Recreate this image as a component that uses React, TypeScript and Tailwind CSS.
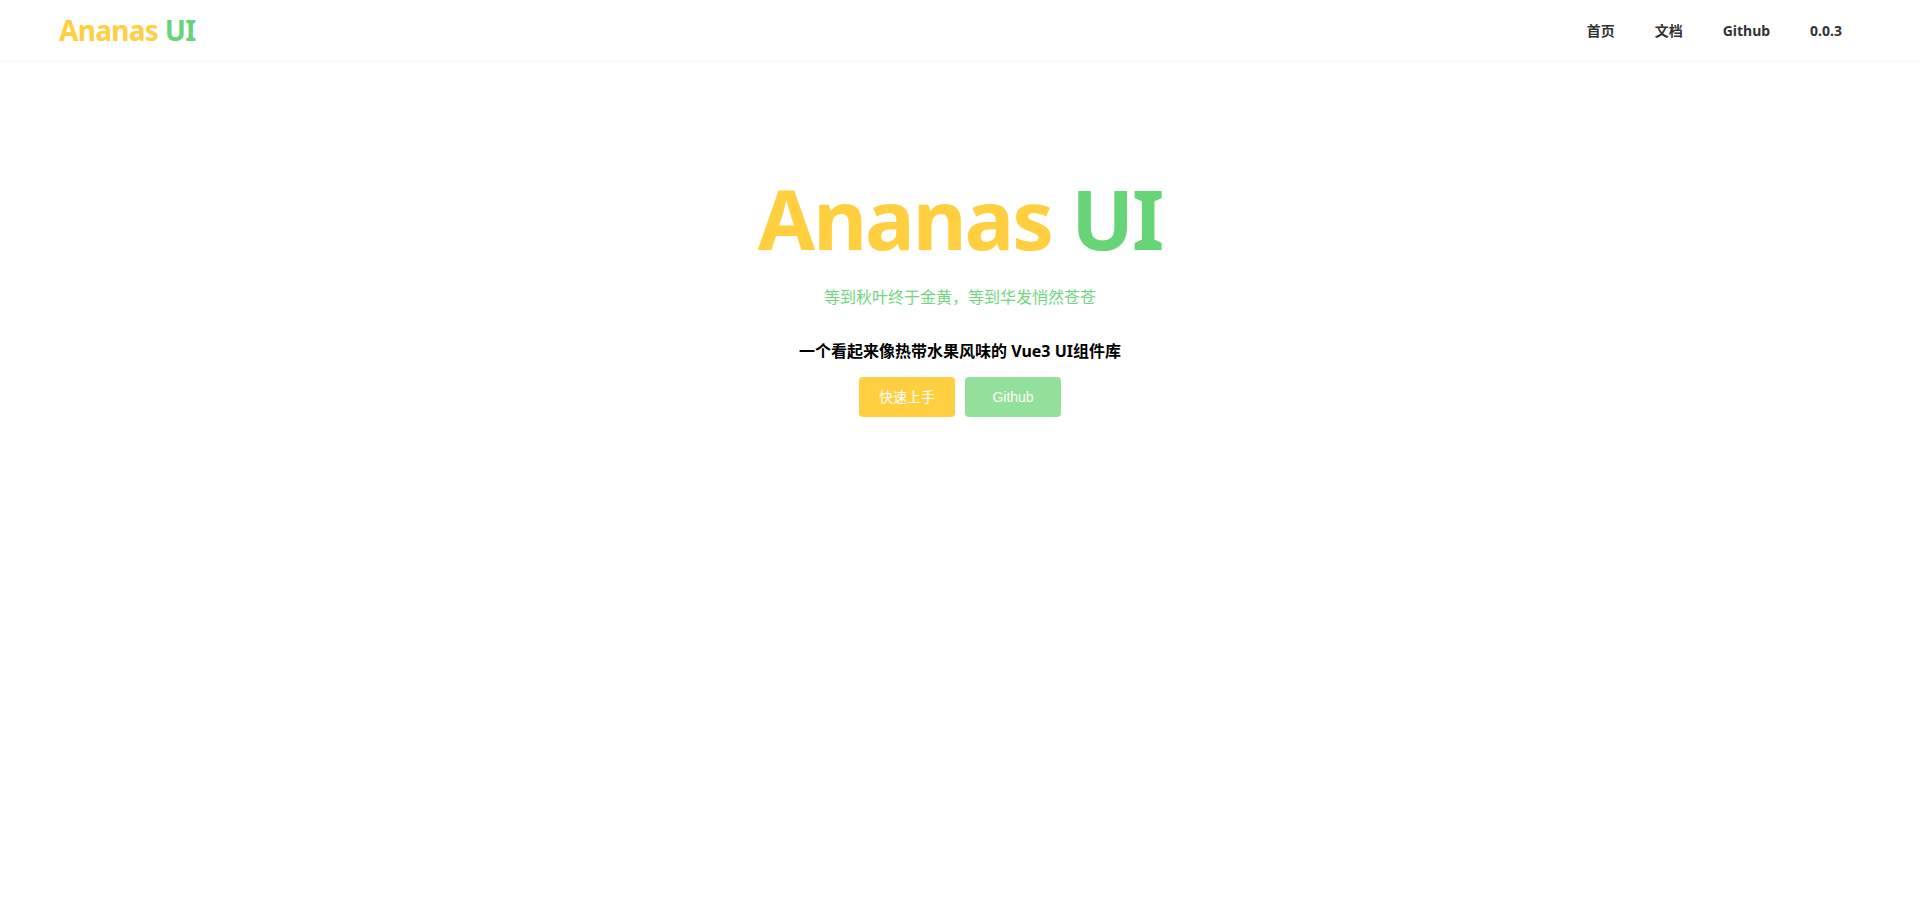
import React from "react";

const navLinks = ["首页", "文档", "Github", "0.0.3"];

const font = "font-['Noto_Sans','Noto_Sans_CJK_SC',sans-serif]";

export default function App() {
  return (
    <div className={`min-h-screen bg-white ${font}`}>
      {/* header */}
      <header className="h-[60px] flex items-center justify-between pl-[59px] pr-[78px] shadow-[0_1px_4px_rgba(0,0,0,0.06)]">
        <a className="text-[28px] font-bold leading-none tracking-tight">
          <span className="text-[#ffcf3f]">Ananas </span>
          <span className="text-[#66d477]">UI</span>
        </a>
        <nav className="flex items-center gap-[40px] text-[14px] font-bold text-[#333]">
          {navLinks.map((item) => (
            <a key={item} className="cursor-pointer">
              {item}
            </a>
          ))}
        </nav>
      </header>

      {/* hero */}
      <section className="flex flex-col items-center pt-[98px]">
        <h1 className="text-[83px] font-bold leading-[120px] tracking-tight">
          <span className="text-[#ffcf3f]">Ananas </span>
          <span className="text-[#66d477]">UI</span>
        </h1>
        <p className="mt-[7px] text-[16px] leading-[24px] text-[#6fd67d]">
          等到秋叶终于金黄，等到华发悄然苍苍
        </p>
        <p className="mt-[30px] text-[16px] font-bold leading-[24px] text-black">
          一个看起来像热带水果风味的 Vue3 UI组件库
        </p>
        <div className="mt-[14px] flex gap-[10px] font-['Liberation_Sans','Noto_Sans_CJK_SC',sans-serif] text-[14px] text-white">
          <button className="w-[96px] h-[40px] rounded-[4px] bg-[#ffcf3f]">
            快速上手
          </button>
          <button className="w-[96px] h-[40px] rounded-[4px] bg-[#93e09b]">
            Github
          </button>
        </div>
      </section>
    </div>
  );
}
